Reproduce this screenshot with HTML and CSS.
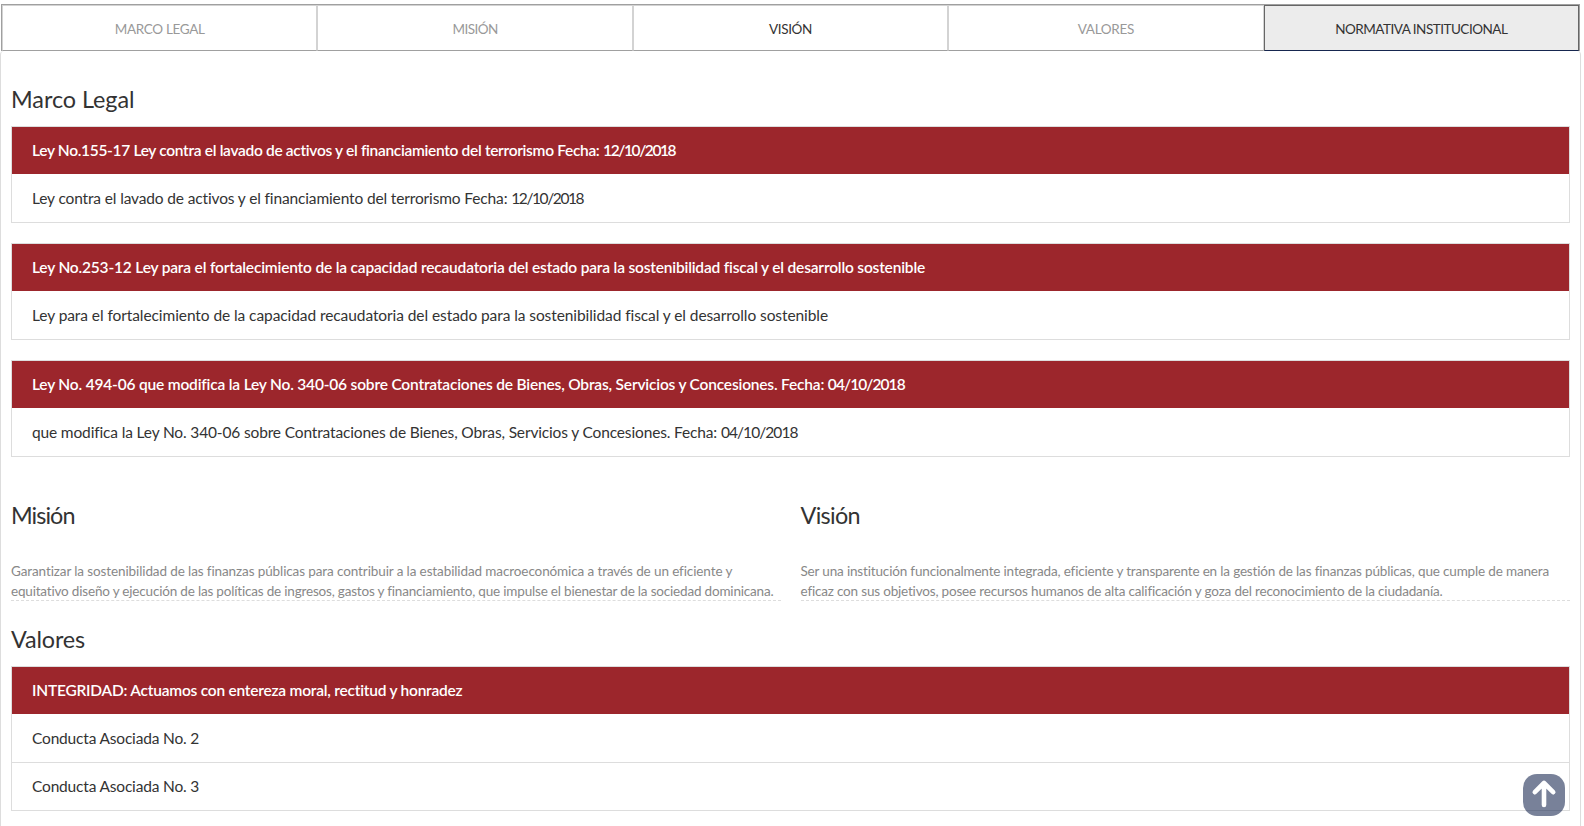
FILE: index.html
```html
<!DOCTYPE html>
<html lang="es">
<head>
<meta charset="utf-8">
<title>Marco Legal</title>
<link rel="stylesheet" href="styles.css">
</head>
<body>
<nav class="tabs">
  <a class="tab t-marco"><span>MARCO LEGAL</span></a>
  <a class="tab t-mision"><span>MISIÓN</span></a>
  <a class="tab tab-dark t-vision"><span>VISIÓN</span></a>
  <a class="tab t-valores"><span>VALORES</span></a>
  <a class="tab tab-active t-norm"><span>NORMATIVA INSTITUCIONAL</span></a>
</nav>
<main class="panel">
  <h2 class="title title-marco">Marco Legal</h2>
  <section class="card">
    <h3 class="card-head"><span class="h-155">Ley No.155-17 Ley contra el lavado de activos y el financiamiento del terrorismo Fecha: <span class="date">12/10/2018</span></span></h3>
    <p class="card-row"><span class="r-155">Ley contra el lavado de activos y el financiamiento del terrorismo Fecha: <span class="date">12/10/2018</span></span></p>
  </section>
  <section class="card">
    <h3 class="card-head"><span class="h-253">Ley No.253-12 Ley para el fortalecimiento de la capacidad recaudatoria del estado para la sostenibilidad fiscal y el desarrollo sostenible</span></h3>
    <p class="card-row"><span class="r-253">Ley para el fortalecimiento de la capacidad recaudatoria del estado para la sostenibilidad fiscal y el desarrollo sostenible</span></p>
  </section>
  <section class="card">
    <h3 class="card-head"><span class="h-494">Ley No. 494-06 que modifica la Ley No. 340-06 sobre Contrataciones de Bienes, Obras, Servicios y Concesiones. Fecha: <span class="date-wide">04/10/2018</span></span></h3>
    <p class="card-row"><span class="r-494">que modifica la Ley No. 340-06 sobre Contrataciones de Bienes, Obras, Servicios y Concesiones. Fecha: <span class="date-wide">04/10/2018</span></span></p>
  </section>
  <div class="columns">
    <section class="statement">
      <h2 class="title title-mision">Misión</h2>
      <p class="statement-text"><span class="m-1">Garantizar la sostenibilidad de las finanzas públicas para contribuir a la estabilidad macroeconómica a través de un eficiente y</span><br><span class="m-2">equitativo diseño y ejecución de las políticas de ingresos, gastos y financiamiento, que impulse el bienestar de la sociedad dominicana.</span></p>
    </section>
    <section class="statement">
      <h2 class="title title-vision">Visión</h2>
      <p class="statement-text"><span class="v-1">Ser una institución funcionalmente integrada, eficiente y transparente en la gestión de las finanzas públicas, que cumple de manera</span><br><span class="v-2">eficaz con sus objetivos, posee recursos humanos de alta calificación y goza del reconocimiento de la ciudadanía.</span></p>
    </section>
  </div>
  <h2 class="title title-valores">Valores</h2>
  <section class="card">
    <h3 class="card-head"><span class="h-int">INTEGRIDAD: Actuamos con entereza moral, rectitud y honradez</span></h3>
    <p class="card-row"><span class="r-con">Conducta Asociada No. 2</span></p>
    <p class="card-row"><span class="r-con">Conducta Asociada No. 3</span></p>
  </section>
</main>
<a class="to-top" aria-label="Subir">
  <svg width="42" height="42" viewBox="0 0 42 42" fill="none" stroke="#fff" stroke-width="4.6" stroke-linecap="round" stroke-linejoin="round"><path d="M21 31V9M11.8 18.2 21 9l9.2 9.2"/></svg>
</a>
</body>
</html>
```
FILE: styles.css
```css
* { box-sizing: border-box; }
body {
  margin: 0;
  height: 826px;
  overflow: hidden;
  padding-top: 4px;
  background: #fff;
  color: #333;
  font-family: Lato, "Open Sans", sans-serif;
  font-size: 15.5px;
  font-variant-ligatures: none;
}
h2, h3, p { margin: 0; font-weight: 400; }
span { white-space: nowrap; }

.tabs {
  display: grid;
  grid-template-columns: repeat(5, 1fr);
  width: 1579px;
  height: 47px;
  margin-left: 1px;
  border: 1px solid #a0a0a0;
  border-bottom: 0;
}
.tab {
  display: flex;
  align-items: center;
  justify-content: center;
  padding-top: 1px;
  border: 1px solid #d3d3d3;
  border-bottom-color: #a0a0a0;
  color: #999;
  font-size: 13.5px;
}
.tab-dark { color: #333; }
.tab-active {
  background: #ececec;
  border-color: #666;
  border-bottom-color: #16264f;
  color: #333;
}
.t-marco { letter-spacing: -.32px; }
.t-mision { letter-spacing: -.55px; }
.t-vision { letter-spacing: -.4px; }
.t-valores { letter-spacing: -.3px; }
.t-norm { letter-spacing: -.5px; }

.panel {
  width: 1581px;
  height: 775px;
  padding: 0 10px;
  border: 1px solid #ddd;
  border-width: 0 1px;
  border-radius: 4px 4px 0 0;
  box-shadow: 0 1px 1px rgba(0, 0, 0, .05);
}
.title { font-size: 23.4px; line-height: 30px; }
.title-marco { padding: 33px 0 12px; letter-spacing: -.05px; }
.card {
  margin-bottom: 20px;
  border: 1px solid #ddd;
  border-top: 0;
}
.card-head, .card-row {
  display: flex;
  align-items: center;
  padding: 0 0 1px 20px;
}
.card-head {
  height: 49px;
  padding-bottom: 2px;
  border-top: 1px solid #ddd;
  border-bottom: 1px solid #fff;
  background: #9c262c;
  background-clip: padding-box;
  color: #fff;
  font-size: 15.5px;
  font-weight: 600;
}
.card-row { height: 47px; }
.card-row + .card-row { height: 48px; border-top: 1px solid #ddd; }
.h-155 { letter-spacing: -.315px; }
.r-155 { letter-spacing: -.14px; }
.h-253 { letter-spacing: -.182px; }
.r-253 { letter-spacing: -.08px; }
.h-494 { letter-spacing: -.185px; }
.r-494 { letter-spacing: -.15px; }
.h-int { letter-spacing: -.225px; }
.r-con { letter-spacing: -.18px; }
.date { letter-spacing: -1.4px; }
.date-wide { letter-spacing: -.93px; }

.columns {
  display: grid;
  grid-template-columns: repeat(2, minmax(0, 1fr));
  gap: 20px;
  padding-top: 23px;
}
.title-mision, .title-vision { padding-bottom: 31px; }
.title-mision { letter-spacing: -.95px; }
.title-vision { letter-spacing: -.67px; }
.statement-text {
  height: 40px;
  border-bottom: 1px dashed #ddd;
  color: #888;
  font-size: 13.5px;
  line-height: 20px;
}
.m-1 { letter-spacing: -.108px; }
.m-2 { letter-spacing: -.185px; }
.v-1 { letter-spacing: -.163px; }
.v-2 { letter-spacing: -.182px; }
.title-valores { padding: 23px 0 12px; letter-spacing: -.15px; }

.to-top {
  position: absolute;
  left: 1523px;
  top: 774px;
  width: 42px;
  height: 42px;
  border-radius: 14px;
  background: rgba(22, 38, 79, .58);
}
```
